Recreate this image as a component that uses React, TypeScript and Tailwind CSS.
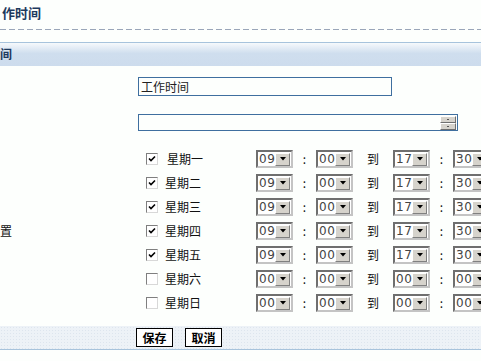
import React from "react"

const font = { fontFamily: '"Noto Sans CJK SC", "DejaVu Sans", sans-serif' }

type Day = {
  name: string
  on: boolean
  from: [string, string]
  to: [string, string]
}

const days: Day[] = [
  { name: "星期一", on: true, from: ["09", "00"], to: ["17", "30"] },
  { name: "星期二", on: true, from: ["09", "00"], to: ["17", "30"] },
  { name: "星期三", on: true, from: ["09", "00"], to: ["17", "30"] },
  { name: "星期四", on: true, from: ["09", "00"], to: ["17", "30"] },
  { name: "星期五", on: true, from: ["09", "00"], to: ["17", "30"] },
  { name: "星期六", on: false, from: ["00", "00"], to: ["00", "00"] },
  { name: "星期日", on: false, from: ["00", "00"], to: ["00", "00"] },
]

function Check({ on }: { on: boolean }) {
  return (
    <div className="w-[12px] h-[12px] border border-t-[#7f7f7f] border-l-[#7f7f7f] border-b-[#d8d8d8] border-r-[#d8d8d8] bg-white flex items-center justify-center">
      {on && (
        <svg width="8" height="8" viewBox="0 0 8 8">
          <path d="M1 3.5 L3 5.5 L7 1.5" stroke="#000" strokeWidth="1.6" fill="none" />
        </svg>
      )}
    </div>
  )
}

function Select({ value }: { value: string }) {
  return (
    <div className="w-[37px] h-[18px] border-2 border-t-[#6f6f6f] border-l-[#6f6f6f] border-b-[#c4c4c4] border-r-[#c4c4c4] bg-white flex items-center justify-between pl-[1px] pr-[1px]">
      <span className="text-[12px] leading-none text-[#444] tracking-[0.5px]" style={{ fontFamily: '"DejaVu Sans", sans-serif' }}>
        {value}
      </span>
      <div className="w-[15px] h-[13px] bg-[#d6d3cc] border border-t-white border-l-white border-b-[#808080] border-r-[#808080] flex items-center justify-center">
        <svg width="6" height="4" viewBox="0 0 6 4">
          <path d="M0 0 H6 L3 3.5 Z" fill="#000" />
        </svg>
      </div>
    </div>
  )
}

function SpinPart() {
  return (
    <div className="w-[16px] h-[7px] bg-[#d6d3cc] border border-t-white border-l-white border-b-[#6f6f6f] border-r-[#6f6f6f] flex items-center justify-center">
      <div className="w-[2px] h-[1px] bg-[#555]" />
    </div>
  )
}

export default function App() {
  return (
    <div className="w-[481px] h-[361px] overflow-hidden bg-[#fdfffd] text-[#111]" style={font}>
      <div className="h-[29px] pl-[2px] pt-[5px] text-[13px] leading-[16px] font-bold text-[#1d3a5e]">作时间</div>
      <div className="h-px bg-[repeating-linear-gradient(to_right,#9aa6b9_0_6px,transparent_6px_9px)]" />
      <div className="h-[12px]" />
      <div className="h-[24px] border-t border-[#a7c3dc] bg-[linear-gradient(#f6f9fc,#cfdeee_45%,#cddced)] pt-[3px] text-[12px] leading-[16px] font-bold text-[#1d3a5e]">
        间
      </div>

      <div className="grid grid-cols-[138px_1fr]">
        <div />
        <div className="pt-[11px]">
          <div className="w-[254px] h-[19px] border border-[#3f6f9f] bg-[#fdfffd] text-[12px] leading-[17px] pl-[2px] text-[#222]">
            工作时间
          </div>
          <div className="mt-[18px] w-[320px] h-[17px] border border-[#3f6f9f] bg-[#fdfffd] flex items-center justify-end pr-[1px]">
            <div className="flex flex-col">
              <SpinPart />
              <SpinPart />
            </div>
          </div>
        </div>

        <div className="flex items-center text-[12px] pt-[16px]">置</div>
        <div className="pt-[16px]">
          {days.map((d, i) => (
            <div key={d.name} className="h-[24px] grid grid-cols-[118px_37px_23px_37px_40px_37px_23px_37px] items-center text-[12px]">
              <div className="flex items-center pl-[8px]">
                <Check on={d.on} />
                <span className={i === 0 ? "ml-[9px]" : "ml-[7px]"}>{d.name}</span>
              </div>
              <Select value={d.from[0]} />
              <div className="text-center">:</div>
              <Select value={d.from[1]} />
              <div className="text-center">到</div>
              <Select value={d.to[0]} />
              <div className="text-center">:</div>
              <Select value={d.to[1]} />
            </div>
          ))}
        </div>
      </div>

      <div className="mt-[11px] h-[24px] border-b border-[#a7c3dc] bg-[#edf2f7] bg-[radial-gradient(#dde5ee_1px,transparent_1px)] bg-[length:3px_3px] flex items-start gap-[12px] pl-[136px] pt-[2px]">
        <button className="w-[37px] h-[19px] border border-black bg-white text-[12px] leading-[16px] font-bold text-black">保存</button>
        <button className="w-[37px] h-[19px] border border-black bg-white text-[12px] leading-[16px] font-bold text-black">取消</button>
      </div>
    </div>
  )
}
